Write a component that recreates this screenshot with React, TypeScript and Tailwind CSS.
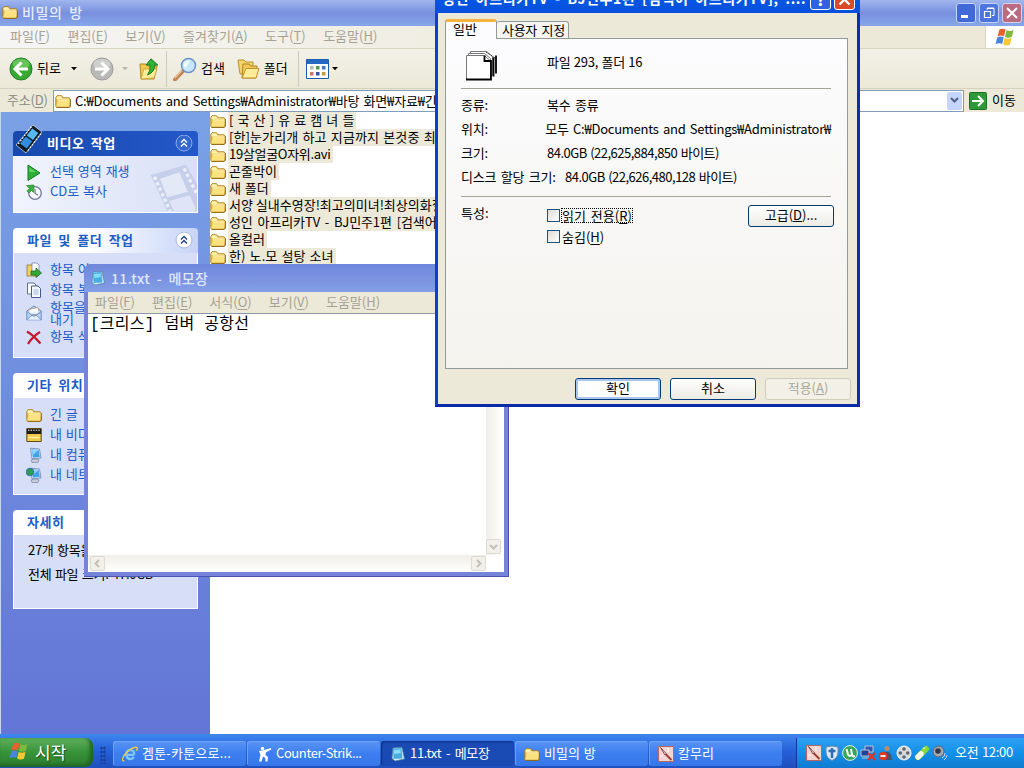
import React from "react";

type IconProps = { className?: string };

function Folder({ className = "w-4 h-4" }: IconProps) {
  return (
    <svg className={`shrink-0 ${className}`} viewBox="0 0 16 16">
      <path d="M.8 4.5V13q0 1.3 1.3 1.3h12l1.2-1.2V6L14 4.8H8L6.6 2.7H2Z" fill="#e9bd45" stroke="#a97c1e" strokeWidth=".9" />
      <path d="M1.6 4 2.4 3.3h3.8l1.3 2.2h6l1 .8H1.6Z" fill="#fff2ae" />
      <path d="M1.2 13.6 3 7.2h12.2l-1 6.6H1.6Z" fill="#fbe281" />
      <path d="M2.3 7h12.5" stroke="#fff7c8" strokeWidth=".9" />
      <path d="M1.5 14.4h12.6l1.2-1V6.4" fill="none" stroke="#8a6415" strokeWidth=".9" />
    </svg>
  );
}

function WindowsFlag({ className = "w-5 h-5" }: IconProps) {
  return (
    <svg className={`shrink-0 ${className}`} viewBox="0 0 20 20">
      <path d="M4.3 2.8Q7.3.8 10.6 2.6L9 9.3Q5.8 7.7 2.5 9.5Z" fill="#e8602c" />
      <path d="M11.5 3.2q3.3 1.6 7-.1L16.8 10q-3.6 1.5-6.9-.1Z" fill="#7fb93b" />
      <path d="M2.2 10.5q3.3-1.8 6.5-.2L7.2 17Q4 15.4.5 17.2Z" fill="#4a86e0" />
      <path d="M9.6 10.9q3.3 1.6 6.9.1L15 17.7q-3.6 1.6-6.9-.1Z" fill="#f8c832" />
    </svg>
  );
}

function FilmIcon({ className = "" }: IconProps) {
  return (
    <svg className={className} viewBox="0 0 28 30">
      <path d="M18 1 27 8 11 29 1 21Z" fill="#111a22" stroke="#dfe8f5" strokeWidth=".7" />
      <path d="M17.3 4.5 23.3 9 18 16 11.7 11.500Z" fill="#55b8f2" />
      <path d="M10.800 12.600 17.200 17.200 11.800 24.400 5 19.500Z" fill="#2f8ee0" />
      <path d="M16.300 2.800 3 20.300M26 9.600 12 27.800" stroke="#fff" strokeWidth="1.200" strokeDasharray="1.600 1.700" />
    </svg>
  );
}

function FilmWatermark() {
  return (
    <svg className="absolute right-0 bottom-0 w-[50px] h-[50px]" viewBox="0 0 54 52">
      <path d="M4 13 42 2 54 23V52H22Z" fill="#c5cfe9" />
      <path d="M14 17 35 10 44 31 22 37Z" fill="#e4e9f7" />
      <path d="M24 41 46 35 52 48V52H29Z" fill="#dfe5f6" />
      <path d="M8 15 25 52M40 6 54 34" stroke="#eef1fb" strokeWidth="3.500" strokeDasharray="3.500 3" />
    </svg>
  );
}

function PlayIcon() {
  return (
    <svg className="w-4 h-[18px]" viewBox="0 0 16 18">
      <path d="M2 2 14 10 2 17.500Z" fill="#2cae38" stroke="#167a22" />
      <path d="M3.300 4.500 10 9H3.300Z" fill="#62d463" />
    </svg>
  );
}

function CdCopyIcon() {
  return (
    <svg className="w-4 h-4" viewBox="0 0 16 16">
      <circle cx="9" cy="9" r="6.300" fill="#f4f6fc" stroke="#77779b" strokeWidth="1.300" />
      <path d="M9 5v4.500l3 1.500" fill="none" stroke="#56566d" />
      <path d="M.5 1.500 8 1 7.500 8.500 5.500 6.500 3 9 .8 7 3.300 4.500Z" fill="#3cae43" stroke="#1c7a26" strokeWidth=".6" />
    </svg>
  );
}

function MoveIcon() {
  return (
    <svg className="w-4 h-4" viewBox="0 0 16 16">
      <path d="M1 3h5l1 2h5v9H1Z" fill="#f1d066" stroke="#8d7230" strokeWidth=".8" />
      <path d="M6 1h5l2 2v7H6Z" fill="#fff" stroke="#7586a5" strokeWidth=".8" />
      <path d="M5 9h5V6l5.500 5L10 15.500V13H5Z" fill="#35a837" stroke="#176d1d" strokeWidth=".8" />
    </svg>
  );
}

function CopyIcon() {
  return (
    <svg className="w-4 h-4" viewBox="0 0 16 16">
      <path d="M1.500 1h6.500l2 2v9H1.500Z" fill="#fff" stroke="#5b6f99" />
      <path d="M5.500 4H12l2.500 2.500V15.500h-9Z" fill="#f5f9ff" stroke="#445b8c" />
      <path d="M7.500 8h5M7.500 10h5M7.500 12h5" stroke="#8fb0dd" strokeWidth=".9" />
    </svg>
  );
}

function MailIcon() {
  return (
    <svg className="w-4 h-4" viewBox="0 0 16 16">
      <path d="M.8 6 8 1l7.200 5v8.800H.8Z" fill="#b9d5f4" stroke="#5d82b8" strokeWidth=".9" />
      <path d="M3 4.500 12 2.500l1.500 6L8 11 3 8Z" fill="#fff" stroke="#b08e66" strokeWidth=".7" />
      <path d="M.8 14.800 6.500 9.500h3l5.700 5.300M.8 6.500 8 11.500l7.200-5" fill="#e4effc" stroke="#5d82b8" strokeWidth=".8" />
    </svg>
  );
}

function DeleteIcon() {
  return (
    <svg className="w-4 h-4" viewBox="0 0 16 16">
      <path d="M1 2.500Q7 6 14.500 14.500M14 3Q7 7 2 15" fill="none" stroke="#c3172e" strokeWidth="2.200" />
    </svg>
  );
}

function VideosIcon() {
  return (
    <svg className="w-4 h-4" viewBox="0 0 16 16">
      <path d="M.8 1.500h14.400v13H.8Z" fill="#f0cb4f" stroke="#5e4c17" />
      <path d="M.8 2h14.400v5H.8Z" fill="#1c1c18" />
      <path d="M2 3.200h13" stroke="#fff" strokeDasharray="1.400 1.200" />
      <path d="M2.500 10.500h11" stroke="#fff0a0" strokeWidth="1.500" />
    </svg>
  );
}

function ComputerIcon({ globe = false }: { globe?: boolean }) {
  return (
    <svg className="w-4 h-4" viewBox="0 0 16 16">
      <path d="M5 13q4-2.500 8 0l-1 2.500H6Z" fill="#c9ccd8" stroke="#80869c" strokeWidth=".7" />
      <path d="M4.500 1.200 13.500 2 15 11 6 11.800Z" fill="#d6e2f5" stroke="#6b84b5" strokeWidth=".8" />
      <path d="M5.700 2.500 12.700 3 13.700 10 7 10.500Z" fill="#3fa3ea" />
      <path d="M5.700 2.500 12.700 3 7 8Z" fill="#8fd2fa" />
      {globe && <circle cx="4" cy="5" r="3.800" fill="#2f9b55" stroke="#2468b5" strokeWidth=".8" />}
    </svg>
  );
}

function NotepadIcon({ className = "w-4 h-4" }: IconProps) {
  return (
    <svg className={`shrink-0 ${className}`} viewBox="0 0 16 16">
      <path d="M3 2 12 1.500 14.500 13 5 15 2 12.500Z" fill="#dfeffa" stroke="#4b7c9f" strokeWidth=".7" />
      <path d="M3 2.500 11.500 2 12.500 12.500 3.500 13Z" fill="#48aee0" />
      <path d="M4 4 10.500 3.500 10.800 7 4.300 8Z" fill="#8adcf6" />
    </svg>
  );
}

function IeIcon() {
  return (
    <svg className="w-4 h-4 shrink-0" viewBox="0 0 16 16">
      <path
        d="M12.200 8.800H4.200Q4.200 4.200 8.300 4.200T12.200 8.800M4.300 9q.5 4 4 4 2.300 0 3.700-2"
        fill="none"
        stroke="#7cc9fa"
        strokeWidth="2.300"
      />
      <path d="M2.500 14.500Q-1.500 16 2 9.500 7 2.500 13 1.300q3.500-.5 1.500 3.500" fill="none" stroke="#f3cf3c" strokeWidth="1.300" />
    </svg>
  );
}

function SoldierIcon() {
  return (
    <svg className="w-4 h-4 shrink-0" viewBox="0 0 16 16">
      <circle cx="6.500" cy="2.500" r="1.700" fill="#fff" />
      <path d="M3 5 8 4l7-2 .3 1.500L10 6.300 9.500 9l2.500 2-.5 4.500H9.500L9.300 12 7 10.500 5.500 15.500H3L4.500 9Z" fill="#fff" />
    </svg>
  );
}

function CaptureIcon() {
  return (
    <svg className="w-4 h-4 shrink-0" viewBox="0 0 16 16">
      <path d="M.5.5h15v15H.5Z" fill="#f2d5cf" stroke="#b86561" />
      <path d="M2.500 1.500 8 7.500 7 9Z" fill="#fff" stroke="#6b2928" strokeWidth=".8" />
      <path d="M7.500 8 13.500 14" stroke="#9d3b36" strokeWidth="2" />
      <path d="M10 2v4M2 10h3" stroke="#fff" />
    </svg>
  );
}

function DownArrow({ className = "fill-black" }: IconProps) {
  return (
    <svg className={`w-[7px] h-1 ${className}`} viewBox="0 0 7 4">
      <path d="M0 0h6L3 3.200Z" />
    </svg>
  );
}

function BackIcon() {
  return (
    <svg className="w-6 h-6" viewBox="0 0 24 24">
      <circle cx="12" cy="12" r="11" fill="#37a832" stroke="#24802a" />
      <ellipse cx="12" cy="7" rx="8.500" ry="5" fill="#79d167" opacity=".7" />
      <path d="M12.500 5.500 6 12l6.500 6.500M6.500 12H19" fill="none" stroke="#fff" strokeWidth="3" />
    </svg>
  );
}

function ForwardIcon() {
  return (
    <svg className="w-6 h-6" viewBox="0 0 24 24">
      <circle cx="12" cy="12" r="11" fill="#b9b9b7" stroke="#9c9c9a" />
      <ellipse cx="12" cy="7" rx="8.500" ry="5" fill="#d8d8d6" opacity=".7" />
      <path d="M11.500 5.500 18 12l-6.500 6.500M17.500 12H5" fill="none" stroke="#fff" strokeWidth="3" />
    </svg>
  );
}

function UpIcon() {
  return (
    <svg className="w-5 h-[22px]" viewBox="0 0 20 22">
      <path d="M1 6h6l2 2h9l-3 13H2Z" fill="#f0c84d" stroke="#b08722" />
      <path d="M2 21 5 11h13l-3 9Z" fill="#ffec9a" stroke="#c69a2d" strokeWidth=".7" />
      <path d="M12 .8 18.800 7H15.500Q16 14 8.500 17q3.500-5 2.500-10H7Z" fill="#32b235" stroke="#187b20" />
    </svg>
  );
}

function SearchIcon() {
  return (
    <svg className="w-6 h-6" viewBox="0 0 24 24">
      <path d="M10 14 2 22.500" stroke="#c28254" strokeWidth="4" strokeLinecap="round" />
      <path d="M9 13.500 2 21" stroke="#eec49c" strokeWidth="1.300" />
      <circle cx="15.500" cy="8.500" r="7" fill="#c4e7fa" stroke="#6d91c8" strokeWidth="1.500" />
      <path d="M10.500 7.500Q12 3 17 3.500L12 12Z" fill="#fff" opacity=".8" />
    </svg>
  );
}

function FoldersIcon() {
  return (
    <svg className="w-[23px] h-[22px]" viewBox="0 0 23 22">
      <path d="M1 2h6l2 2h7v12H3Z" fill="#f3d36a" stroke="#b88f30" />
      <path d="M6 6h6l1.500 2H20v4L19 20H5Z" fill="#f0c957" stroke="#b08427" />
      <path d="M5 20 9 10.500h13L19 20Z" fill="#ffec98" stroke="#bd912c" />
    </svg>
  );
}

function ViewsIcon() {
  const colors = ["#b8b8b8", "#4e9a50", "#3f75c6", "#d07070", "#2d55a8", "#c09b38"];
  return (
    <svg className="w-[23px] h-5" viewBox="0 0 23 20">
      <path d="M.5.5h22v19H.5Z" fill="#fff" stroke="#1c5aab" />
      <path d="M1 1h21v4H1Z" fill="#2468c5" />
      {colors.map((color, i) => (
        <rect key={i} x={4 + (i % 3) * 6} y={i < 3 ? 7 : 13} width="3.500" height="3.500" fill={color} />
      ))}
    </svg>
  );
}

function MenuItem({ label, hotkey }: { label: string; hotkey: string }) {
  return (
    <span className="whitespace-nowrap">
      {label}(<u className="underline-offset-2">{hotkey}</u>)
    </span>
  );
}

function TaskHeader({ title, dark = false }: { title: string; dark?: boolean }) {
  return (
    <div
      className={`h-[25px] flex items-center justify-between rounded-t-[4px] pr-[5px] font-bold text-[13px] ${
        dark
          ? "pl-[34px] text-white bg-linear-to-r from-[#1749ad] to-[#2458c9]"
          : "pl-[14px] text-[#215dc6] bg-linear-to-r from-white from-40% to-[#c7d4f7]"
      }`}
    >
      <span className="tracking-[0.5px] [word-spacing:3px] pb-0.5">{title}</span>
      <svg className="w-[18px] h-[18px]" viewBox="0 0 18 18">
        <circle cx="9" cy="8" r="8" fill={dark ? "#3467cf" : "#fff"} stroke={dark ? "#89a9e8" : "#a9b8de"} />
        <path d="M6 7.500 9 4.500l3 3M6 11.500 9 8.500l3 3" fill="none" stroke={dark ? "#fff" : "#1f3f86"} strokeWidth="1.400" />
      </svg>
    </div>
  );
}

function TaskLink({ icon, children }: { icon: React.ReactNode; children: React.ReactNode }) {
  return (
    <div className="h-5 flex items-center gap-2 whitespace-nowrap">
      <span className="w-4 flex justify-center">{icon}</span>
      <span className="pb-[3px] [word-spacing:1px]">{children}</span>
    </div>
  );
}

function Sidebar() {
  const box = "border border-t-0 border-white bg-[#d6dff7] pl-3 text-[#215dc6]";
  return (
    <div className="w-[210px] shrink-0 border-l border-[#c9d4ee] pl-3 pr-3 pt-[19px] bg-linear-to-b from-[#7aa1e6] to-[#6375d6] text-[13px] leading-[13px]">
      <div className="relative">
        <TaskHeader title="비디오 작업" dark />
        <FilmIcon className="absolute left-0.5 -top-[7px] w-[28px] h-[30px]" />
        <div className={`${box} relative h-[57px] pt-[6px] bg-linear-to-r from-[#f1f4fd] to-[#d8e0f6]`}>
          <FilmWatermark />
          <div className="relative">
            <TaskLink icon={<PlayIcon />}>선택 영역 재생</TaskLink>
            <TaskLink icon={<CdCopyIcon />}>CD로 복사</TaskLink>
          </div>
        </div>
      </div>
      <div className="mt-[15px]">
        <TaskHeader title="파일 및 폴더 작업" />
        <div className={`${box} h-[105px] pt-[7px]`}>
          <TaskLink icon={<MoveIcon />}>항목 이동</TaskLink>
          <TaskLink icon={<CopyIcon />}>항목 복사</TaskLink>
          <div className="h-[26px] mb-px flex items-center gap-2">
            <MailIcon />
            <span className="leading-[12px] pb-px">
              항목을 전자 메일로 보<br />
              내기
            </span>
          </div>
          <TaskLink icon={<DeleteIcon />}>항목 삭제</TaskLink>
        </div>
      </div>
      <div className="mt-[15px]">
        <TaskHeader title="기타 위치" />
        <div className={`${box} h-[97px] pt-[7px]`}>
          <TaskLink icon={<Folder />}>긴 글</TaskLink>
          <TaskLink icon={<VideosIcon />}>내 비디오</TaskLink>
          <TaskLink icon={<ComputerIcon />}>내 컴퓨터</TaskLink>
          <TaskLink icon={<ComputerIcon globe />}>내 네트워크 환경</TaskLink>
        </div>
      </div>
      <div className="mt-[15px]">
        <TaskHeader title="자세히" />
        <div className="h-[74px] border border-t-0 border-white bg-[#d6dff7] pl-[14px] pt-2 text-black tracking-[-0.3px] [word-spacing:1px]">
          <div className="mb-[11px]">27개 항목을 선택했습니다.</div>
          <div>전체 파일 크기: 47.0GB</div>
        </div>
      </div>
    </div>
  );
}

const folders = [
  { name: "[ 국 산 ] 유 료 캠 녀 들", fit: "[word-spacing:1.2px]" },
  { name: "[한]눈가리개 하고 지금까지 본것중 최고", fit: "tracking-[0.1px] [word-spacing:1.2px]" },
  { name: "19살얼굴O자위.avi", fit: "tracking-[-0.3px]" },
  { name: "곤줄박이", fit: "" },
  { name: "새 폴더", fit: "[word-spacing:1px]" },
  { name: "서양 실내수영장!최고의미녀!최상의화질", fit: "" },
  { name: "성인 아프리카TV - BJ민주1편 [검색어", fit: "tracking-[-0.1px] [word-spacing:2px]" },
  { name: "올컬러", fit: "" },
  { name: "한) 노.모 설탕 소녀", fit: "tracking-[0.1px] [word-spacing:1px]" },
];

function Explorer() {
  return (
    <div className="h-[734px] flex flex-col">
      <div className="h-[26px] flex items-center justify-between pl-0.5 pr-0.5 bg-linear-to-b from-[#9fb6ed] via-[#7890df] to-[#86a6ea] text-[#e3ecfc]">
        <div className="flex items-center gap-1 text-[14px] font-medium pb-0.5">
          <Folder />
          <span className="tracking-[0.6px] [word-spacing:3px]">비밀의 방</span>
        </div>
        <div className="flex gap-[3px]">
          <div className="w-5 h-5 rounded-[3px] border border-[#c5d4f8] bg-[#4169d8] flex items-end pl-1 pb-1">
            <div className="w-[7px] h-[3px] bg-white" />
          </div>
          <div className="w-5 h-5 rounded-[3px] border border-[#c5d4f8] bg-[#4d74dc]">
            <svg viewBox="0 0 18 18" fill="none" stroke="#fff">
              <path d="M7 6V4.500h7v7h-2M7 4h7" />
              <path d="M4.500 7.500h6v6h-6ZM4 7.500h7" strokeWidth="1.200" />
            </svg>
          </div>
          <div className="w-5 h-5 rounded-[3px] border border-[#ddd3e8] bg-[#bb6b7f]">
            <svg viewBox="0 0 18 18" stroke="#fff" strokeWidth="2">
              <path d="m4 4 10 10M14 4 4 14" />
            </svg>
          </div>
        </div>
      </div>

      <div className="h-[23px] flex items-center justify-between bg-linear-to-r from-[#f5f5f3] to-[#ece9d8] to-70% border-b border-[#d8d5c5] text-[13px] leading-none text-[#a5a295]">
        <div className="flex gap-[17.5px] pl-2.5 pb-[3px]">
          <MenuItem label="파일" hotkey="F" />
          <MenuItem label="편집" hotkey="E" />
          <MenuItem label="보기" hotkey="V" />
          <MenuItem label="즐겨찾기" hotkey="A" />
          <MenuItem label="도구" hotkey="T" />
          <MenuItem label="도움말" hotkey="H" />
        </div>
        <div className="w-[39px] h-[22px] bg-white border-l border-[#d8d5c5] flex items-center justify-center">
          <WindowsFlag />
        </div>
      </div>

      <div className="h-10 flex items-center bg-linear-to-b from-[#f2f1e8] to-[#ece9d8] border-b border-[#d5d2c2] pl-[9px] text-[13px] leading-none">
        <BackIcon />
        <span className="ml-1 pb-0.5">뒤로</span>
        <DownArrow className="ml-[10px] fill-black" />
        <span className="ml-3 flex">
          <ForwardIcon />
        </span>
        <DownArrow className="ml-2 fill-[#b8b6aa]" />
        <span className="ml-[10px]">
          <UpIcon />
        </span>
        <div className="ml-[7px] h-9 w-px bg-[#cdcabb]" />
        <span className="ml-1.5">
          <SearchIcon />
        </span>
        <span className="ml-1 pb-0.5">검색</span>
        <span className="ml-[12px]">
          <FoldersIcon />
        </span>
        <span className="ml-1 pb-0.5">폴더</span>
        <div className="ml-[10px] h-9 w-px bg-[#cdcabb]" />
        <span className="ml-[7px]">
          <ViewsIcon />
        </span>
        <DownArrow className="ml-[3px] fill-black" />
      </div>

      <div className="h-[23px] flex items-center bg-[#ece9d8] text-[13px] leading-none">
        <div className="w-[53px] pl-[7px] pb-[3px] text-[#8d8b80] tracking-[-0.2px]">
          <MenuItem label="주소" hotkey="D" />
        </div>
        <div className="w-[911px] h-[22px] bg-white border border-[#7f9db9] flex items-center justify-between pl-px pr-px">
          <div className="flex items-center gap-1 whitespace-nowrap">
            <Folder />
            <span className="tracking-[-0.17px] [word-spacing:1.5px]">
              C:₩Documents and Settings₩Administrator₩바탕 화면₩자료₩긴 글₩비밀의 방
            </span>
          </div>
          <div className="w-[15px] h-[18px] rounded-[2px] bg-[#c5d5fb] flex items-center justify-center">
            <svg className="w-[9px] h-[7px]" viewBox="0 0 9 7" fill="none" stroke="#4d6185" strokeWidth="2">
              <path d="m1 1 3.500 3.500L8 1" />
            </svg>
          </div>
        </div>
        <svg className="ml-[5px] w-[18px] h-[18px]" viewBox="0 0 18 18">
          <rect x=".5" y=".5" width="17" height="17" rx="1" fill="#2f9838" stroke="#1d7127" />
          <path d="M3 9h11M9 4l5 5-5 5" fill="none" stroke="#fff" strokeWidth="2" />
        </svg>
        <span className="ml-[5px] pb-0.5">이동</span>
      </div>

      <div className="flex-1 flex min-h-0">
        <Sidebar />
        <div className="flex-1 bg-white overflow-hidden text-[13px]">
          {folders.map((folder) => (
            <div key={folder.name} className="h-[17px] flex items-center whitespace-nowrap">
              <Folder />
              <span className={`h-[17px] ml-0.5 pl-px pr-0.5 bg-[#ece9d8] leading-[15px] ${folder.fit}`}>{folder.name}</span>
            </div>
          ))}
        </div>
      </div>
    </div>
  );
}

function ScrollButton({ d }: { d: string }) {
  return (
    <div className="w-[15px] h-[15px] rounded-[2px] border border-[#dedbd0] bg-[#f1f0ea]">
      <svg viewBox="0 0 13 13" fill="none" stroke="#c3c1b6" strokeWidth="2">
        <path d={d} />
      </svg>
    </div>
  );
}

function Notepad() {
  return (
    <div className="absolute left-[84px] top-[264px] w-[425px] h-[313px] flex flex-col rounded-t-[7px] bg-[#7583d8] border-r border-b border-[#4b55b0] px-1 pb-1">
      <div className="h-[28px] -mx-1 pl-[6px] flex items-center gap-[5px] rounded-t-[7px] bg-linear-to-b from-[#7088dc] via-[#7a92e0] to-[#819fe6] text-[#dfe7fb] text-[14px] font-medium">
        <NotepadIcon />
        <span className="tracking-[0.35px] [word-spacing:3px]">11.txt - 메모장</span>
      </div>
      <div className="h-[21px] flex items-center gap-[17px] pl-[7px] pb-0.5 bg-[#ece9d8] text-[13px] leading-none text-[#a5a295]">
        <MenuItem label="파일" hotkey="F" />
        <MenuItem label="편집" hotkey="E" />
        <MenuItem label="서식" hotkey="O" />
        <MenuItem label="보기" hotkey="V" />
        <MenuItem label="도움말" hotkey="H" />
      </div>
      <div className="flex-1 flex flex-col bg-white border-t border-[#8b9aa8]">
        <div className="flex-1 flex">
          <div className="flex-1 pl-[2px] pt-[3px] text-[16px] leading-4 font-['Liberation_Mono','Noto_Sans_CJK_KR',monospace]">
            <span className="tracking-[0.25px]">[크리스] 덤벼 공항선</span>
          </div>
          <div className="w-4 mr-[2px] flex flex-col justify-end bg-linear-to-r from-[#f0efe9] to-[#fefefb] pb-px">
            <ScrollButton d="m3 5 3.500 3.500L10 5" />
          </div>
        </div>
        <div className="h-[17px] w-[398px] flex justify-between bg-linear-to-b from-[#f0efe9] to-[#fefefb] py-px pl-0.5">
          <ScrollButton d="M8 3 4.500 6.500 8 10" />
          <ScrollButton d="m5 3 3.500 3.500L5 10" />
        </div>
      </div>
    </div>
  );
}

function DialogButton({ kind, children }: { kind: "default" | "normal" | "disabled"; children: React.ReactNode }) {
  const look = {
    default: "border-[#003c74] bg-white shadow-[inset_0_0_0_2px_#a9c5f0]",
    normal: "border-[#003c74] bg-linear-to-b from-white to-[#ecebe5]",
    disabled: "border-[#cfccba] bg-[#f3f1e7] text-[#a8a69a]",
  };
  return (
    <div className={`w-[86px] h-[22px] rounded-[3px] border flex items-center justify-center ${look[kind]}`}>
      <span className="pb-[3px]">{children}</span>
    </div>
  );
}

function Field({ name, fit = "", children }: { name: string; fit?: string; children: React.ReactNode }) {
  return (
    <div className="h-6 flex items-center whitespace-nowrap">
      <span className="w-[86px] [word-spacing:2px]">{name}</span>
      <span className={fit}>{children}</span>
    </div>
  );
}

function Checkbox({ children }: { children: React.ReactNode }) {
  return (
    <div className="h-[21px] flex items-center gap-0.5">
      <div className="w-[13px] h-[13px] border border-[#1c5180] bg-linear-to-br from-[#dcdcd7] to-white" />
      {children}
    </div>
  );
}

function PropertiesDialog() {
  return (
    <div className="absolute left-[435px] -top-[17px] w-[425px] h-[424px] flex flex-col bg-[#ece9d8] border-[3px] border-t-0 border-[#0a3fd0] border-r-[#0a2fae] border-b-[#0a2aa8] text-[13px] leading-none">
      <div className="h-[30px] -mx-[3px] pl-[7px] pr-[5px] flex items-center justify-between bg-linear-to-b from-[#1c6cf0] via-[#0556e5] to-[#0650dc] text-white">
        <span className="text-[14px] font-bold whitespace-nowrap tracking-[0.6px] [word-spacing:3px]">
          성인 아프리카TV - BJ민주1편 [검색어 아프리카TV], ....
        </span>
        <div className="flex gap-[3px] mt-[3px]">
          <div className="w-[21px] h-[21px] rounded-[3px] border border-white bg-[#2f62e0] flex items-center justify-center font-bold text-[17px] pb-0.5">
            ?
          </div>
          <div className="w-[21px] h-[21px] rounded-[3px] border border-white bg-[#da4a26]">
            <svg viewBox="0 0 19 19" stroke="#fff" strokeWidth="2.400">
              <path d="m4.500 4.500 10 10M14.500 4.500l-10 10" />
            </svg>
          </div>
        </div>
      </div>

      <div className="flex items-end pl-[7px] h-[25px]">
        <div className="relative z-10 w-[52px] h-5 -mb-px rounded-t-[3px] border-x border-t-[3px] border-x-[#919b9c] border-t-[#f5b33f] bg-[#fcfcfe] pl-[7px]">
          일반
        </div>
        <div className="w-[72px] h-[17px] rounded-t-[3px] border border-l-0 border-b-0 border-[#919b9c] bg-[#f6f5f0] pl-[5px] pt-px whitespace-nowrap tracking-[-0.3px] [word-spacing:2px]">
          사용자 지정
        </div>
      </div>

      <div className="ml-[7px] w-[403px] h-[331px] border border-[#919b9c] bg-linear-to-b from-[#fcfcfe] to-[#f4f3ee] pl-[15px] pr-4">
        <div className="h-[50px] flex items-center border-b border-[#a5a397] tracking-[-0.2px]">
          <svg className="ml-1 w-9 h-8 mt-1" viewBox="0 0 36 32">
            <path d="M5.500 1.500h16l6 5v19h-22Z" fill="#fff" stroke="#777" />
            <path d="M3.500 3.500h16l6 5v19h-22Z" fill="#fff" stroke="#777" />
            <path d="M1.500 5.500h18l6 5.500v18.500h-24Z" fill="#fff" stroke="#777" />
            <path d="M19.500 5.500V11h6M26 10v19.500H1M28.500 7.500v19M31 5.500v18" fill="none" stroke="#000" strokeWidth="1.800" />
            <path d="m21 2 9 6" stroke="#000" strokeDasharray="1 1" />
          </svg>
          <span className="ml-[46px] pb-[5px] [word-spacing:0.5px]">파일 293, 폴더 16</span>
        </div>
        <div className="pt-[3px] h-[108px] border-b border-[#a5a397] tracking-[-0.25px]">
          <Field name="종류:" fit="[word-spacing:2px]">
            복수 종류
          </Field>
          <Field name="위치:" fit="[word-spacing:1.700px]">
            모두 C:₩Documents and Settings₩Administrator₩
          </Field>
          <Field name="크기:" fit="tracking-[-0.5px] [word-spacing:1px]">
            84.0GB (22,625,884,850 바이트)
          </Field>
          <Field name="디스크 할당 크기:" fit="ml-[18px] tracking-[-0.5px] [word-spacing:1px]">
            84.0GB (22,626,480,128 바이트)
          </Field>
        </div>
        <div className="pt-2 flex items-start">
          <span className="w-[86px] pt-px">특성:</span>
          <div className="flex-1">
            <Checkbox>
              <span className="outline-1 outline-dotted outline-black leading-[13px] [word-spacing:2px]">
                <MenuItem label="읽기 전용" hotkey="R" />
              </span>
            </Checkbox>
            <Checkbox>
              <MenuItem label="숨김" hotkey="H" />
            </Checkbox>
          </div>
          <div className="-mr-[3px]">
            <DialogButton kind="normal">
              고급(<u>D</u>)...
            </DialogButton>
          </div>
        </div>
      </div>

      <div className="mt-[9px] pr-[6px] flex justify-end gap-[9px]">
        <DialogButton kind="default">확인</DialogButton>
        <DialogButton kind="normal">취소</DialogButton>
        <DialogButton kind="disabled">
          적용(<u>A</u>)
        </DialogButton>
      </div>
    </div>
  );
}

type TaskButtonProps = { icon: React.ReactNode; label: string; active?: boolean; fit?: string };

function TaskButton({ icon, label, active = false, fit = "" }: TaskButtonProps) {
  return (
    <div
      className={`w-[133px] h-[25px] rounded-[3px] flex items-center gap-1 pl-[9px] whitespace-nowrap ${
        active
          ? "bg-[#1a4bb5] shadow-[inset_1px_1px_2px_#0c2f80]"
          : "bg-linear-to-b from-[#5a95f5] via-[#3c7ef0] to-[#3877e8] shadow-[inset_1px_1px_0_#6ba1f6]"
      }`}
    >
      {icon}
      <span className={`pb-[3px] ${fit}`}>{label}</span>
    </div>
  );
}

function TrayIcons() {
  return (
    <div className="flex items-center gap-0.5">
      <CaptureIcon />
      <svg className="w-4 h-4" viewBox="0 0 16 16">
        <path d="M2 2q6-2 12 0v5q0 6-6 8.500Q2 13 2 7Z" fill="#dbe8f5" stroke="#6886a8" />
        <path d="M8 3v10M4.500 6h7" stroke="#2b6cb5" strokeWidth="2.500" />
      </svg>
      <svg className="w-4 h-4" viewBox="0 0 16 16">
        <circle cx="8" cy="8" r="7.400" fill="#36a45a" stroke="#e0f4e5" />
        <path d="M4.500 4 6 9.500q1 2.500 4 .5L9 4M10 10q1 2 3 1" fill="none" stroke="#fff" strokeWidth="2" />
      </svg>
      <svg className="w-4 h-4" viewBox="0 0 16 16">
        <path d="M5 1h8v6H5Z" fill="#3155b4" stroke="#bac5db" />
        <path d="M1 5h8v6H1ZM2 13h7" fill="#233f98" stroke="#bac5db" />
        <path d="m8 8 7 7M15 8l-7 7" stroke="#e23027" strokeWidth="2" />
      </svg>
      <svg className="w-4 h-4" viewBox="0 0 16 16">
        <circle cx="9" cy="3.500" r="2.500" fill="#b78d70" />
        <path d="M5 15q-.5-8 4-8.500 5 .5 5 8.500Z" fill="#44566a" />
        <circle cx="5" cy="11" r="4.300" fill="#e03823" />
        <path d="M2.500 11h5" stroke="#fff" strokeWidth="1.800" />
      </svg>
      <svg className="w-4 h-4" viewBox="0 0 16 16">
        <circle cx="8" cy="8" r="7" fill="#d7dade" stroke="#f4f4f4" />
        <g fill="#5d656e">
          <circle cx="8" cy="4" r="1.800" />
          <circle cx="4.300" cy="8" r="1.800" />
          <circle cx="11.700" cy="8" r="1.800" />
          <circle cx="8" cy="12" r="1.800" />
        </g>
      </svg>
      <svg className="w-4 h-4" viewBox="0 0 16 16">
        <path d="M4 12 12 4" stroke="#8ed63c" strokeWidth="6" strokeLinecap="round" />
        <path d="M4 12 7 9" stroke="#f5f8e5" strokeWidth="5.500" strokeLinecap="round" />
        <path d="m9 4 2-1.500" stroke="#d7f5a5" strokeWidth="1.500" />
      </svg>
      <svg className="w-4 h-4" viewBox="0 0 16 16">
        <circle cx="6.500" cy="6.500" r="5.500" fill="#a5a9b2" stroke="#59606c" />
        <circle cx="6" cy="6" r="2.800" fill="#343b48" />
        <path d="M10 13q3-1 3-5M12 15q3-2 3-5" fill="none" stroke="#c3d8f5" />
      </svg>
    </div>
  );
}

function Taskbar() {
  return (
    <div className="h-[34px] pt-1 flex bg-linear-to-b from-[#3f86ee] via-[#2560d9] to-[#1e50bd] text-white text-[13px] leading-none">
      <div className="w-[93px] h-[29px] rounded-r-[8px] bg-linear-to-b from-[#5eae5c] via-[#379338] to-[#2c7d2e] shadow-[inset_-3px_-2px_4px_#1d6022] flex items-center gap-1.5 pl-[9px] pb-[3px] text-[17px]">
        <WindowsFlag />
        <span className="tracking-[0.2px] [text-shadow:1px_1px_1px_#1a4d1c]">시작</span>
      </div>
      <div className="w-5 flex justify-center pt-2">
        <div className="w-1.5 h-[18px] bg-[radial-gradient(#1742a0_1px,transparent_1.3px)] bg-size-[3px_4px]" />
      </div>
      <div className="flex gap-px pt-[3px]">
        <TaskButton icon={<IeIcon />} label="겜툰-카툰으로..." fit="tracking-[0.2px]" />
        <TaskButton icon={<SoldierIcon />} label="Counter-Strik..." fit="tracking-[-0.4px]" />
        <TaskButton icon={<NotepadIcon />} label="11.txt - 메모장" fit="tracking-[-0.3px] [word-spacing:2px]" active />
        <TaskButton icon={<Folder />} label="비밀의 방" fit="[word-spacing:1px]" />
        <TaskButton icon={<CaptureIcon />} label="칼무리" />
      </div>
      <div className="ml-auto w-[228px] h-[30px] border-l border-[#0d3a94] bg-linear-to-b from-[#2da0f2] via-[#1290e8] to-[#127ad0] flex items-center pl-[9px]">
        <TrayIcons />
        <span className="ml-[7px] pb-[3px] whitespace-nowrap tracking-[-0.3px] [word-spacing:1px]">오전 12:00</span>
      </div>
    </div>
  );
}

export default function App() {
  return (
    <div className="relative w-[1024px] h-[768px] overflow-hidden bg-white text-black font-['Noto_Sans_CJK_KR',sans-serif]">
      <Explorer />
      <Taskbar />
      <Notepad />
      <PropertiesDialog />
    </div>
  );
}
